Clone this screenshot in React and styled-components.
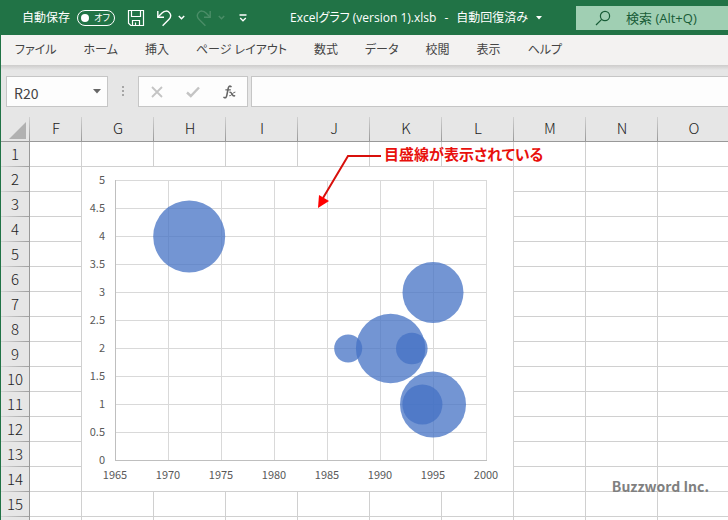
import { useState } from "react";
import styled, { createGlobalStyle } from "styled-components";

const GlobalStyle = createGlobalStyle`
  *, *::before, *::after {
    box-sizing: border-box;
  }

  body {
    margin: 0;
    font-family: "Open Sans", "Noto Sans CJK JP", sans-serif;
    font-feature-settings: "palt";
  }

  button, input {
    font: inherit;
    color: inherit;
  }
`;

// ==== Window ====
const Window = styled.div`
  display: flex;
  flex-direction: column;
  height: 100vh;
  overflow: hidden;
  border-left: 1px solid #217346;
  background: #e6e6e6;
`;

// ==== Title bar ====
const TitleBar = styled.header`
  display: grid;
  grid-template-columns: 255px 320px 1fr;
  align-items: center;
  flex: none;
  height: 35px;
  background: #217346;
  color: #fff;
  font-size: 12px;
  line-height: 16px;
`;

const QuickAccess = styled.div`
  display: flex;
  align-items: center;
  padding-left: 21px;
`;

const AutoSave = styled.label`
  display: flex;
  align-items: center;
  gap: 7px;
  margin-right: 12px;
`;

const Switch = styled.button`
  display: flex;
  align-items: center;
  justify-content: space-between;
  width: 38px;
  height: 16px;
  padding: 0 4px 0 3px;
  border: 1px solid #fff;
  border-radius: 8px;
  background: none;
  color: #fff;
  font-size: 9px;
  line-height: 14px;

  &::before {
    content: "";
    width: 8px;
    height: 8px;
    border-radius: 50%;
    background: #fff;
  }
`;

const ToolButton = styled.button`
  display: flex;
  flex: none;
  align-items: center;
  justify-content: center;
  width: ${(props) => props.$width}px;
  height: 24px;
  margin-right: ${(props) => props.$gap || 0}px;
  padding: 0;
  border: none;
  background: none;
  color: #fff;

  &:disabled {
    color: #4a8d67;
  }
`;

const DocumentTitle = styled.button`
  display: flex;
  align-items: center;
  justify-content: center;
  gap: 8px;
  padding: 0;
  border: none;
  background: none;
  color: #fff;
  white-space: pre;
`;

const Search = styled.label`
  display: flex;
  align-items: center;
  gap: 15px;
  height: 24px;
  padding-left: 19px;
  background: #a0cfb3;
  color: #185c37;
  font-size: 13px;
`;

const SearchInput = styled.input`
  flex: 1;
  min-width: 0;
  padding: 0;
  border: none;
  outline: none;
  background: none;

  &::placeholder {
    color: #185c37;
    opacity: 1;
  }
`;

// ==== Ribbon tabs ====
const Tabs = styled.nav`
  display: flex;
  align-items: center;
  gap: 27px;
  flex: none;
  height: 30px;
  padding: 0 14px;
  background: #f3f2f1;
`;

const Tab = styled.a`
  color: #444;
  font-size: 12px;
  line-height: 20px;
  text-decoration: none;
  white-space: nowrap;
`;

// ==== Formula bar ====
const FormulaBar = styled.div`
  display: flex;
  flex: none;
  padding: 11px 0 10px 5px;
  background: linear-gradient(#cdcccb, #e6e6e6 5px);
  font-family: "Noto Sans CJK JP", sans-serif;
`;

const Box = styled.div`
  display: flex;
  align-items: center;
  height: 31px;
  border: 1px solid #c6c6c6;
  background: #fdfdfd;
`;

const NameBox = styled(Box)`
  width: 102px;
  padding: 0 5px 0 7px;
`;

const NameInput = styled.input`
  flex: 1;
  min-width: 0;
  padding: 2px 0 0;
  border: none;
  outline: none;
  background: none;
  color: #444;
  font-size: 14px;
  line-height: 20px;
`;

const Grip = styled.div`
  display: flex;
  align-items: center;
  justify-content: center;
  width: 30px;
`;

const FormulaButtons = styled(Box)`
  width: 110px;
  margin-right: 3px;
`;

const FormulaInput = styled.input`
  flex: 1;
  min-width: 0;
  height: 31px;
  border: 1px solid #c6c6c6;
  border-right: none;
  outline: none;
  background: #fdfdfd;
`;

// ==== Sheet ====
const Sheet = styled.main`
  position: relative;
  flex: 1;
  min-height: 0;
  overflow: hidden;
  background: #fff;
  font-family: "Noto Sans CJK JP", sans-serif;
`;

const Grid = styled.table`
  width: 100%;
  min-width: 729px;
  table-layout: fixed;
  border-collapse: separate;
  border-spacing: 0;
`;

const Column = styled.col`
  width: ${(props) => (props.$width ? `${props.$width}px` : "auto")};
`;

const HeaderCell = styled.th`
  height: 25px;
  padding: 0 0 2px;
  border-bottom: 1px solid #999;
  background: linear-gradient(#d0d0d0, #999) right / 1px 100% no-repeat #e6e6e6;
  color: #222;
  font-size: 15px;
  font-weight: 300;
  line-height: 20px;
`;

const Corner = styled(HeaderCell)`
  padding: 4px 3px 2px 8px;

  svg {
    display: block;
  }
`;

const RowHeader = styled.th`
  height: 25px;
  padding: 0 0 2px;
  border-right: 1px solid #999;
  background: linear-gradient(90deg, #d6d6d6, #a0a0a0) bottom / 100% 1px no-repeat #e6e6e6;
  color: #222;
  font-size: 15px;
  font-weight: 300;
  line-height: 20px;
`;

const Cell = styled.td`
  height: 25px;
  padding: 0;
  border-right: 1px solid #d0d0d0;
  border-bottom: 1px solid #d0d0d0;
`;

const Chart = styled.svg`
  display: block;
  font-size: 11px;
  fill: #595959;
`;

// ==== Notes lying over the cells ====
const Callout = styled.p`
  position: absolute;
  top: 26px;
  left: 383px;
  margin: 0;
  color: #e8100c;
  font-size: 15px;
  font-weight: 700;
  line-height: 22px;
  white-space: nowrap;
`;

const CalloutArrow = styled.svg`
  position: absolute;
  top: 33px;
  left: 315px;
`;

const Credit = styled.p`
  position: absolute;
  top: 358px;
  right: 19px;
  margin: 0;
  color: #808080;
  font-size: 14px;
  font-weight: 700;
  line-height: 22px;
`;

const tabs = ["ファイル", "ホーム", "挿入", "ページ レイアウト", "数式", "データ", "校閲", "表示", "ヘルプ"];

const columns = [
  { name: "F", width: 52 },
  { name: "G", width: 72 },
  { name: "H", width: 72 },
  { name: "I", width: 72 },
  { name: "J", width: 72 },
  { name: "K", width: 72 },
  { name: "L", width: 72 },
  { name: "M", width: 72 },
  { name: "N", width: 72 },
  { name: "O" },
];

const rows = Array.from({ length: 15 }, (_, i) => i + 1);

// The chart takes the cells G2:L14
const chartArea = { row: 2, rowSpan: 13, column: "G", colSpan: 6 };
const chartColumns = ["H", "I", "J", "K", "L"];

const bubbles = [
  { year: 1972, value: 4, r: 36 },
  { year: 1995, value: 3, r: 30.5 },
  { year: 1991, value: 2, r: 34.7 },
  { year: 1987, value: 2, r: 14 },
  { year: 1993, value: 2, r: 15.8 },
  { year: 1995, value: 1, r: 33 },
  { year: 1994, value: 1, r: 20 },
];

const years = [1965, 1970, 1975, 1980, 1985, 1990, 1995, 2000];
const values = [0, 0.5, 1, 1.5, 2, 2.5, 3, 3.5, 4, 4.5, 5];

const xOf = (year) => 33 + ((year - 1965) / 5) * 53;
const yOf = (value) => 293 - value * 56;

function BubbleChart() {
  return (
    <Chart width="431" height="324" role="img" aria-label="バブルチャート">
      <g stroke="#d9d9d9" shapeRendering="crispEdges">
        {values.map((v) => (
          <line key={v} x1={33} x2={404} y1={yOf(v) + 0.5} y2={yOf(v) + 0.5} />
        ))}
        {years.map((y) => (
          <line key={y} x1={xOf(y) + 0.5} x2={xOf(y) + 0.5} y1={13} y2={294} />
        ))}
        <path d="M33.5 13V293.5H405" fill="none" stroke="#bfbfbf" />
      </g>
      <g fill="#4472c4" fillOpacity="0.75">
        {bubbles.map((b) => (
          <circle key={`${b.year}-${b.value}`} cx={xOf(b.year)} cy={yOf(b.value) + 0.5} r={b.r} />
        ))}
      </g>
      <g textAnchor="end">
        {values.map((v) => (
          <text key={v} x={23} y={yOf(v) + 4}>{v}</text>
        ))}
      </g>
      <g textAnchor="middle">
        {years.map((y) => (
          <text key={y} x={xOf(y)} y={312}>{y}</text>
        ))}
      </g>
    </Chart>
  );
}

function Chevron() {
  return (
    <svg width="7" height="5" fill="none" stroke="currentColor" strokeWidth="1.5">
      <path d="M.8 1L3.5 3.7L6.2 1" />
    </svg>
  );
}

function TopBar() {
  const [autoSave, setAutoSave] = useState(false);

  return (
    <TitleBar>
      <QuickAccess>
        <AutoSave>
          自動保存
          <Switch role="switch" aria-checked={autoSave} onClick={() => setAutoSave(!autoSave)}>
            オフ
          </Switch>
        </AutoSave>
        <ToolButton $width={18} $gap={11} aria-label="上書き保存">
          <svg width="18" height="18" fill="none" stroke="currentColor" strokeWidth="1.2">
            <path d="M1.5 1.5H16.5V16.5H3.8L1.5 14.2Z" />
            <path d="M4.5 1.5V7.5H13.5V1.5M5.5 16.5V11.5H12.5V16.5M8.5 13.5V16.5" />
          </svg>
        </ToolButton>
        <ToolButton $width={16} $gap={5} aria-label="元に戻す">
          <svg width="16" height="18" fill="none" stroke="currentColor" strokeWidth="1.4">
            <path d="M1.8 2V8.2H8" />
            <path d="M2 8L6 4C8.5 1.4 11.8 1.6 13.4 3.6C15.2 5.8 14.8 8.6 12.8 10.6L6.6 16.8" />
          </svg>
        </ToolButton>
        <ToolButton $width={9} $gap={10} aria-label="元に戻す一覧">
          <Chevron />
        </ToolButton>
        <ToolButton $width={16} $gap={5} disabled aria-label="やり直し">
          <svg width="16" height="18" fill="none" stroke="currentColor" strokeWidth="1.4">
            <path d="M14.2 2V8.2H8" />
            <path d="M14 8L10 4C7.5 1.4 4.2 1.6 2.6 3.6C.8 5.8 1.2 8.6 3.2 10.6L9.4 16.8" />
          </svg>
        </ToolButton>
        <ToolButton $width={9} $gap={12} disabled aria-label="やり直し一覧">
          <Chevron />
        </ToolButton>
        <ToolButton $width={10} aria-label="クイック アクセス ツール バーのユーザー設定">
          <svg width="8" height="8" fill="none" stroke="currentColor" strokeWidth="1.3">
            <path d="M.5 1H7.5M1.2 4L4 6.8L6.8 4" />
          </svg>
        </ToolButton>
      </QuickAccess>
      <DocumentTitle>
        <span>Excelグラフ (version 1).xlsb</span>
        <span>-</span>
        <span>自動回復済み</span>
        <svg width="6" height="4" fill="currentColor">
          <path d="M0 0H6L3 3.5Z" />
        </svg>
      </DocumentTitle>
      <Search>
        <svg width="16" height="16" fill="none" stroke="currentColor" strokeWidth="1.2">
          <circle cx="10" cy="6" r="4.6" />
          <path d="M6.7 9.3L1 15" />
        </svg>
        <SearchInput type="text" aria-label="検索" placeholder="検索 (Alt+Q)" />
      </Search>
    </TitleBar>
  );
}

function FormulaRow() {
  return (
    <FormulaBar>
      <NameBox>
        <NameInput type="text" aria-label="名前ボックス" defaultValue="R20" />
        <ToolButton $width={10} aria-label="名前の一覧">
          <svg width="8" height="5" fill="#666">
            <path d="M0 0H8L4 4.5Z" />
          </svg>
        </ToolButton>
      </NameBox>
      <Grip>
        <svg width="2" height="11" fill="#a6a6a6">
          <path d="M0 0H2V2H0ZM0 4H2V6H0ZM0 8H2V10H0Z" />
        </svg>
      </Grip>
      <FormulaButtons>
        <ToolButton $width={36} aria-label="キャンセル">
          <svg width="12" height="12" fill="none" stroke="#c4c4c4" strokeWidth="1.8">
            <path d="M1 1L11 11M11 1L1 11" />
          </svg>
        </ToolButton>
        <ToolButton $width={36} aria-label="入力">
          <svg width="14" height="12" fill="none" stroke="#c4c4c4" strokeWidth="2.4">
            <path d="M1 6.5L4.8 10L13 1.5" />
          </svg>
        </ToolButton>
        <ToolButton $width={36} aria-label="関数の挿入">
          <svg width="13" height="14" fill="none" stroke="#666" strokeLinecap="round">
            <path d="M8 1.6C6.6 .4 5.6 1.4 5.2 3.4L3.8 10.4C3.4 12.4 2.4 13.4 1 12.4" strokeWidth="1.6" />
            <path d="M2.8 4.8H7.4" strokeWidth="1.2" />
            <path d="M7 7.2C8.8 6.4 9 11.8 11.6 10.8" strokeWidth="1.5" />
            <path d="M12 7C10.4 6.6 8.4 11.4 6.6 10.9" strokeWidth="1" />
          </svg>
        </ToolButton>
      </FormulaButtons>
      <FormulaInput type="text" aria-label="数式バー" />
    </FormulaBar>
  );
}

function SheetRow({ number }) {
  const last = chartArea.row + chartArea.rowSpan;
  const underChart = number >= chartArea.row && number < last;

  return (
    <tr>
      <RowHeader scope="row">{number}</RowHeader>
      {columns.map(({ name }) => {
        if (underChart && chartColumns.includes(name)) return null;
        if (underChart && name === chartArea.column) {
          return number === chartArea.row ? (
            <Cell key={name} rowSpan={chartArea.rowSpan} colSpan={chartArea.colSpan}>
              <BubbleChart />
            </Cell>
          ) : null;
        }
        return <Cell key={name} />;
      })}
    </tr>
  );
}

function App() {
  return (
    <Window>
      <GlobalStyle />
      <TopBar />
      <Tabs>
        {tabs.map((tab) => (
          <Tab key={tab} href="#">{tab}</Tab>
        ))}
      </Tabs>
      <FormulaRow />
      <Sheet>
        <Grid>
          <colgroup>
            <Column $width={29} />
            {columns.map((c) => (
              <Column key={c.name} $width={c.width} />
            ))}
          </colgroup>
          <thead>
            <tr>
              <Corner>
                <svg width="17" height="17" fill="#b1b1b1">
                  <path d="M17 0V17H0Z" />
                </svg>
              </Corner>
              {columns.map((c) => (
                <HeaderCell key={c.name} scope="col">{c.name}</HeaderCell>
              ))}
            </tr>
          </thead>
          <tbody>
            {rows.map((number) => (
              <SheetRow key={number} number={number} />
            ))}
            <SheetRow />
          </tbody>
        </Grid>
        <Callout>目盛線が表示されている</Callout>
        <CalloutArrow width="68" height="60" fill="none" stroke="#d8100c" strokeWidth="2">
          <path d="M65 6H32L7 48" />
          <path d="M2 58L3 45L13 51Z" fill="#f00" stroke="none" />
        </CalloutArrow>
        <Credit>Buzzword Inc.</Credit>
      </Sheet>
    </Window>
  );
}

export default App;
